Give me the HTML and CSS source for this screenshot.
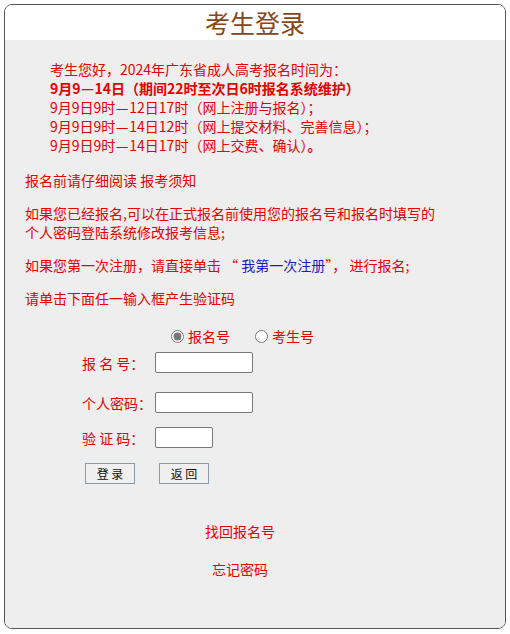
FILE: index.html
```html
<!DOCTYPE html>
<html lang="zh-CN">
<head>
    <meta charset="UTF-8">
    <meta name="viewport" content="width=device-width, initial-scale=1.0">
    <link rel="stylesheet" href="styles.css">
    <title>考生登录</title>
</head>
<body>
    <div class="login-box">
        <div class="login-title">考生登录</div>
        <div class="login-body">
            <div class="notice">
                考生您好，2024年广东省成人高考报名时间为：<br>
                <strong>9月9<span class="dash">—</span>14日（期间22时至次日6时报名系统维护）</strong><br>
                9月9日9时<span class="dash">—</span>12日17时（网上注册与报名）；<br>
                9月9日9时<span class="dash">—</span>14日12时（网上提交材料、完善信息）；<br>
                9月9日9时<span class="dash">—</span>14日17时（网上交费、确认）<strong>。</strong>
            </div>
            <p class="tip">报名前请仔细阅读 报考须知</p>
            <p class="tip">如果您已经报名,可以在正式报名前使用您的报名号和报名时填写的<br>个人密码登陆系统修改报考信息;</p>
            <p class="tip">如果您第一次注册，请直接单击 “ <a href="#" class="reg-link">我第一次注册</a>”， 进行报名;</p>
            <p class="tip">请单击下面任一输入框产生验证码</p>

            <form class="login-form" onsubmit="return false;">
                <div class="radio-row">
                    <label><input type="radio" name="idtype" checked>报名号</label>
                    <label><input type="radio" name="idtype">考生号</label>
                </div>
                <div class="field-row">
                    <span class="field-label">报&nbsp;名&nbsp;号：</span>
                    <input type="text" class="field-input">
                </div>
                <div class="field-row">
                    <span class="field-label">个人密码：</span>
                    <input type="password" class="field-input">
                </div>
                <div class="field-row short">
                    <span class="field-label">验&nbsp;证&nbsp;码：</span>
                    <input type="text" class="field-input code-input">
                </div>
                <div class="button-row">
                    <button type="submit" class="form-button">登 录</button>
                    <button type="button" class="form-button">返 回</button>
                </div>
            </form>

            <div class="links">
                <a href="#">找回报名号</a>
                <a href="#">忘记密码</a>
            </div>
        </div>
    </div>
</body>
</html>
```

FILE: styles.css
```css
body {
    margin: 4px;
    font-family: "Noto Sans CJK SC", "Noto Sans", sans-serif;
    font-size: 14px;
    color: #e60000;
    background: #ffffff;
}
.login-box {
    box-sizing: border-box;
    height: 625px;
    border: 1px solid #555;
    border-radius: 8px;
    overflow: hidden;
    display: flex;
    flex-direction: column;
}
.login-title {
    height: 35px;
    line-height: 35px;
    background: #ffffff;
    text-align: center;
    font-size: 25px;
    color: #86461a;
}
.login-body {
    flex: 1;
    background: #eeeeee;
    padding: 20px 0 0 20px;
}
.notice {
    padding-left: 25px;
    line-height: 19px;
}
.notice strong {
    font-weight: bold;
}
/* give the dash a full-width slot like the original */
.dash {
    display: inline-block;
    width: 1em;
    text-align: center;
}
.tip {
    margin: 14px 0 0;
    line-height: 19px;
}
.notice + .tip {
    margin-top: 16px;
}
.reg-link {
    color: #1a1ac8;
    text-decoration: none;
}
.login-form {
    margin-top: 17px;
}
.radio-row {
    display: flex;
    gap: 25px;
    padding-left: 146px;
    height: 22px;
    align-items: center;
}
.radio-row label {
    display: flex;
    align-items: center;
}
.radio-row input {
    margin: 0 4px 0 0;
    width: 13px;
    height: 13px;
    accent-color: #777;
}
.field-row {
    display: flex;
    align-items: center;
    margin-top: 5px;
    height: 21px;
}
.field-row + .field-row {
    margin-top: 19px;
}
.field-row.short {
    margin-top: 14px;
}
.field-label {
    box-sizing: border-box;
    width: 130px;
    padding-left: 57px;
    white-space: nowrap;
}
.field-input {
    box-sizing: border-box;
    width: 98px;
    height: 21px;
    margin: 0;
    border: 1px solid #777;
    border-radius: 2px;
    background: #fff;
    padding: 1px 3px;
}
.code-input {
    width: 58px;
}
.button-row {
    display: flex;
    gap: 24px;
    padding-left: 60px;
    margin-top: 15px;
}
.form-button {
    box-sizing: border-box;
    width: 50px;
    height: 21px;
    padding: 0;
    border: 1px solid #8a98a8;
    border-radius: 0;
    background: #f0f0f0;
    font-family: "Noto Sans CJK SC", sans-serif;
    font-size: 12px;
    color: #111;
}
.links {
    display: flex;
    flex-direction: column;
    align-items: center;
    gap: 19px;
    margin: 38px 50px 0 0;
    line-height: 19px;
}
.links a {
    color: #e60000;
    text-decoration: none;
}
```
